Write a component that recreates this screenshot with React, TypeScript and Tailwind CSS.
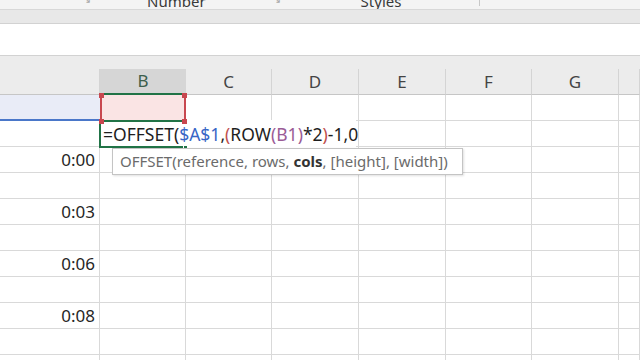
import React from "react";

const COLS = [
  { key: "A", label: "", width: "w-[100px]" },
  { key: "B", label: "B", width: "w-[86px]" },
  { key: "C", label: "C", width: "w-[86px]" },
  { key: "D", label: "D", width: "w-[87px]" },
  { key: "E", label: "E", width: "w-[87px]" },
  { key: "F", label: "F", width: "w-[86px]" },
  { key: "G", label: "G", width: "w-[87px]" },
  { key: "H", label: "", width: "flex-1" },
];

const A_VALUES: Record<number, string> = { 3: "0:00", 5: "0:03", 7: "0:06", 9: "0:08" };
const ROWS = [1, 2, 3, 4, 5, 6, 7, 8, 9, 10, 11];

const font = "font-['Noto_Sans','Open_Sans',sans-serif]";

function Ribbon() {
  return (
    <div className={`h-[9px] overflow-hidden bg-[#f4f4f4] flex text-[15px] leading-[16px] text-[#3a3a3a] ${font}`}>
      <div className="w-[82px]" />
      <span className="-mt-[9px] text-[11px] text-[#aaa]">↘</span>
      <div className="w-[56px]" />
      <span className="-mt-[7px]">Number</span>
      <div className="w-[66px]" />
      <span className="-mt-[9px] text-[11px] text-[#aaa]">↘</span>
      <div className="w-[80px]" />
      <span className="-mt-[7px]">Styles</span>
      <div className="w-[78px]" />
      <div className="w-px h-[6px] bg-[#c8c8c8]" />
    </div>
  );
}

function HeaderRow() {
  return (
    <div className="flex h-[26px] bg-[#ececec]">
      {COLS.map((c) =>
        c.key === "B" ? (
          <div
            key={c.key}
            className={`${c.width} flex items-center justify-center bg-[#d6d6d6] border-b-2 border-[#217346] text-[17px] text-[#3d5f4c] ${font}`}
          >
            {c.label}
          </div>
        ) : (
          <div
            key={c.key}
            className={`${c.width} flex items-center justify-center border-r border-[#d4d4d4] border-b border-b-[#c6c6c6] text-[17px] text-[#444] ${font}`}
          >
            {c.label}
          </div>
        )
      )}
    </div>
  );
}

function Formula() {
  return (
    <span className="whitespace-nowrap text-[17.5px] text-[#1e1e1e]">
      =OFFSET(<span className="text-[#3866c6]">$A$1</span>,
      <span className="text-[#c0504d]">(</span>ROW
      <span className="text-[#9a5c96]">(B1)</span>*2
      <span className="text-[#c0504d]">)</span>-1,0
    </span>
  );
}

function Corner({ pos }: { pos: string }) {
  return <span className={`absolute w-[5px] h-[5px] bg-[#c8474f] ${pos}`} />;
}

function Cell({ row, col }: { row: number; col: (typeof COLS)[number] }) {
  const base = `${col.width} h-[26px] border-r border-b border-[#d9d9d9] relative`;

  if (row === 1 && col.key === "A") {
    return <div className={`${col.width} h-[26px] bg-[#e9ecf7] border-b-2 border-[#4a77c9]`} />;
  }
  if (row === 1 && col.key === "B") {
    return (
      <div className={`${col.width} h-[26px] relative bg-[#fae4e4] border-x-2 border-[#c8474f]`}>
        <Corner pos="-left-[3px] -top-[2px]" />
        <Corner pos="-right-[3px] -top-[2px]" />
        <Corner pos="-left-[3px] -bottom-[3px] z-20" />
        <Corner pos="-right-[3px] -bottom-[3px] z-20" />
      </div>
    );
  }
  if (row === 2 && col.key === "B") {
    return (
      <div className={`${base} z-10`}>
        <div className="absolute -left-px -top-px w-[257px] h-[28px] bg-white border-l-2 border-[#217346] flex items-center pl-[2px]">
          <Formula />
          <span className="w-px h-[19px] bg-black ml-px mt-[4px]" />
        </div>
        <div className="absolute -left-px -top-px w-[88px] h-[28px] border-t-2 border-b-2 border-[#217346] pointer-events-none" />
        <span className="absolute -right-[3px] bottom-[-4px] w-[5px] h-[5px] bg-[#217346] border border-white" />
        <div
          className={`absolute left-[12px] top-[27px] h-[27px] w-[351px] bg-white border border-[#c4c4c4] shadow-[1px_1px_2px_rgba(0,0,0,0.12)] flex items-center pl-[7px] text-[15px] text-[#6b6b6b] whitespace-nowrap ${font}`}
        >
          OFFSET(reference, rows,&nbsp;<b className="font-bold text-[#333]">cols</b>, [height], [width])
        </div>
      </div>
    );
  }
  if (col.key === "A") {
    return (
      <div className={`${base} flex items-center justify-end pr-[4px] text-[17px] text-[#262626] ${font}`}>
        {A_VALUES[row] ?? ""}
      </div>
    );
  }
  return <div className={base} />;
}

export default function App() {
  return (
    <div className={`w-[640px] h-[360px] overflow-hidden bg-white ${font}`}>
      <Ribbon />
      <div className="h-px bg-[#d8d8d8]" />
      <div className="h-[13px] bg-[#e8e8e8]" />
      <div className="h-px bg-[#d2d2d2]" />
      <div className="h-[31px] bg-white" />
      <div className="h-px bg-[#d2d2d2]" />
      <div className="h-[13px] bg-[#ececec]" />
      <HeaderRow />
      {ROWS.map((r) => (
        <div key={r} className={`flex ${r === 2 ? "relative z-10" : ""}`}>
          {COLS.map((c) => (
            <Cell key={c.key} row={r} col={c} />
          ))}
        </div>
      ))}
    </div>
  );
}
